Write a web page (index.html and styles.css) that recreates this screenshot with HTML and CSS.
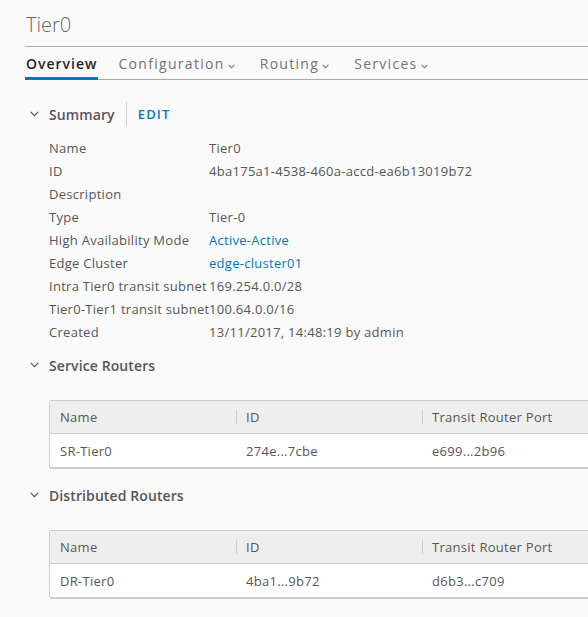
FILE: index.html
```html
<!DOCTYPE html>
<html>
<head>
<meta charset="utf-8">
<link rel="stylesheet" href="styles.css">
</head>
<body>
<div class="page">
  <h1 class="title">Tier0</h1>
  <nav class="tabs">
    <span class="tab active">Overview</span>
    <span class="tab">Configuration<svg class="caret" width="7" height="5" viewBox="0 0 7 5"><path d="M0.6 0.8 L3.5 3.8 L6.4 0.8" fill="none" stroke="#737373" stroke-width="1.1"/></svg></span>
    <span class="tab">Routing<svg class="caret" width="7" height="5" viewBox="0 0 7 5"><path d="M0.6 0.8 L3.5 3.8 L6.4 0.8" fill="none" stroke="#737373" stroke-width="1.1"/></svg></span>
    <span class="tab">Services<svg class="caret" width="7" height="5" viewBox="0 0 7 5"><path d="M0.6 0.8 L3.5 3.8 L6.4 0.8" fill="none" stroke="#737373" stroke-width="1.1"/></svg></span>
  </nav>

  <section class="section summary">
    <div class="sec-head">
      <svg class="chev" width="9" height="6" viewBox="0 0 9 6"><path d="M0.7 0.9 L4.5 4.7 L8.3 0.9" fill="none" stroke="#565656" stroke-width="1.2"/></svg>
      <span class="sec-title">Summary</span>
      <span class="sep"></span>
      <span class="edit">EDIT</span>
    </div>
    <dl class="props">
      <div class="row"><dt>Name</dt><dd>Tier0</dd></div>
      <div class="row"><dt>ID</dt><dd>4ba175a1-4538-460a-accd-ea6b13019b72</dd></div>
      <div class="row"><dt>Description</dt><dd></dd></div>
      <div class="row"><dt>Type</dt><dd>Tier-0</dd></div>
      <div class="row"><dt>High Availability Mode</dt><dd class="link">Active-Active</dd></div>
      <div class="row"><dt>Edge Cluster</dt><dd class="link">edge-cluster01</dd></div>
      <div class="row"><dt>Intra Tier0 transit subnet</dt><dd>169.254.0.0/28</dd></div>
      <div class="row"><dt>Tier0-Tier1 transit subnet</dt><dd>100.64.0.0/16</dd></div>
      <div class="row"><dt>Created</dt><dd>13/11/2017, 14:48:19 by admin</dd></div>
    </dl>
  </section>

  <section class="section sr">
    <div class="sec-head">
      <svg class="chev" width="9" height="6" viewBox="0 0 9 6"><path d="M0.7 0.9 L4.5 4.7 L8.3 0.9" fill="none" stroke="#565656" stroke-width="1.2"/></svg>
      <span class="sec-title">Service Routers</span>
    </div>
    <div class="grid">
      <div class="g-head">
        <div class="cell">Name</div>
        <div class="cell">ID</div>
        <div class="cell">Transit Router Port</div>
      </div>
      <div class="g-row">
        <div class="cell">SR-Tier0</div>
        <div class="cell">274e...7cbe</div>
        <div class="cell">e699...2b96</div>
      </div>
    </div>
  </section>

  <section class="section dr">
    <div class="sec-head">
      <svg class="chev" width="9" height="6" viewBox="0 0 9 6"><path d="M0.7 0.9 L4.5 4.7 L8.3 0.9" fill="none" stroke="#565656" stroke-width="1.2"/></svg>
      <span class="sec-title">Distributed Routers</span>
    </div>
    <div class="grid">
      <div class="g-head">
        <div class="cell">Name</div>
        <div class="cell">ID</div>
        <div class="cell">Transit Router Port</div>
      </div>
      <div class="g-row">
        <div class="cell">DR-Tier0</div>
        <div class="cell">4ba1...9b72</div>
        <div class="cell">d6b3...c709</div>
      </div>
    </div>
  </section>
</div>
</body>
</html>
```
FILE: styles.css
```css
html, body {
  margin: 0;
  padding: 0;
  background: #fafafa;
  overflow: hidden;
}
body {
  font-family: "Open Sans", "Liberation Sans", sans-serif;
  color: #565656;
}
.page {
  padding-left: 25px;
}
.title {
  margin: 0;
  height: 47px;
  box-sizing: border-box;
  padding: 12px 0 0 1px;
  font-size: 20px;
  font-weight: 300;
  line-height: 26px;
  color: #666;
  border-bottom: 1px solid #aaa;
}
.tabs {
  display: flex;
  height: 33px;
  box-sizing: border-box;
  border-bottom: 1px solid #aaa;
  gap: 19px;
}
.tab {
  display: flex;
  align-items: center;
  font-size: 14px;
  font-weight: 500;
  letter-spacing: 1.3px;
  color: #737373;
  padding: 0 1px;
  height: 32px;
  box-sizing: border-box;
}
.tab.active {
  color: #1f1f1f;
  font-weight: 600;
  letter-spacing: 1px;
  border-bottom: 3px solid #0079b8;
  padding-top: 3px;
  margin-bottom: -1px;
  height: 33px;
}
.caret {
  margin-left: 3px;
  margin-right: 4px;
  margin-top: 7px;
}
.sec-head {
  display: flex;
  align-items: center;
  height: 24px;
  padding-left: 5px;
}
.chev {
  margin-right: 10px;
}
.sec-title {
  font-size: 14px;
  font-weight: 600;
  letter-spacing: 0.1px;
  color: #565656;
}
.sep {
  width: 1px;
  height: 24px;
  background: #ccc;
  margin: 0 11px 0 11px;
}
.edit {
  font-size: 13px;
  font-weight: 600;
  color: #0079b8;
  letter-spacing: 1.2px;
}
.summary .sec-head {
  margin-top: 22px;
}
.props {
  margin: 10px 0 0 24px;
  padding: 0;
}
.row {
  display: flex;
  height: 23px;
  align-items: center;
  font-size: 13px;
  letter-spacing: 0.28px;
}
.row dt {
  width: 160px;
  flex: none;
  white-space: nowrap;
}
.row dd {
  margin: 0;
  white-space: nowrap;
}
.row dd.link {
  color: #0079b8;
}
.sr .sec-head {
  margin-top: 10px;
}
.dr .sec-head {
  margin-top: 14px;
}
.grid {
  margin: 23px 0 0 24px;
  border: 1px solid #ccc;
  border-right: none;
  border-bottom-width: 2px;
  border-radius: 3px 0 0 3px;
  background: #fff;
  font-size: 13px;
  letter-spacing: 0.28px;
}
.g-head, .g-row {
  display: grid;
  grid-template-columns: 186px 186px 1fr;
}
.g-head {
  height: 32px;
  background: #eee;
  border-bottom: 1px solid #ccc;
  font-weight: 500;
}
.g-row {
  height: 33px;
}
.cell {
  display: flex;
  align-items: center;
  padding-left: 10px;
  position: relative;
  white-space: nowrap;
}
.g-head .cell + .cell::before {
  content: "";
  position: absolute;
  left: 0;
  top: 9px;
  height: 14px;
  width: 1px;
  background: #ccc;
}
```
